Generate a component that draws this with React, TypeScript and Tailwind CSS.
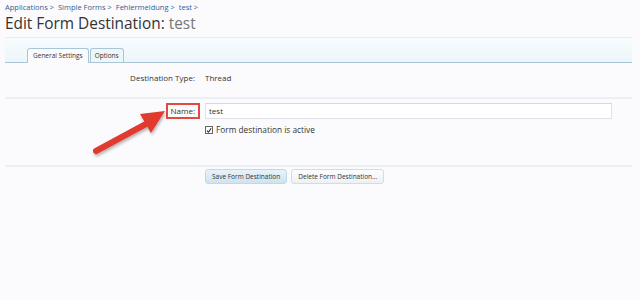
import React from "react";

export default function App() {
  const font = { fontFamily: '"Open Sans", "DejaVu Sans", sans-serif' };
  return (
    <div className="relative w-[640px] h-[300px] bg-[#fbfbfe] text-[#333]" style={font}>
      <div className="pl-[5px] pr-[8px]">
        <div className="pt-[3px] h-[13px] text-[7.5px] leading-[9px] text-[#2f5f8f] flex gap-[4px]">
          <span>Applications &gt;</span>
          <span>Simple Forms &gt;</span>
          <span>Fehlermeldung &gt;</span>
          <span>test &gt;</span>
        </div>
        <h1 className="text-[15.4px] leading-[22px] h-[24px] text-[#333]">
          Edit Form Destination: <span className="text-[#777]">test</span>
        </h1>
        <div className="mt-[0px] h-[26px] border-t border-[#e9eef2] border-b border-b-[#a9c6d5] bg-gradient-to-b from-[#f8fcfe] to-[#ecf6fa] flex items-end pl-[22px]">
          <div className="h-[15px] -mb-px px-[5px] text-[6.5px] leading-[14px] bg-[#fbfbfe] border border-[#a9c6d5] border-b-0 rounded-t-[3px] text-[#333]">
            General Settings
          </div>
          <div className="h-[14px] px-[4px] text-[6.5px] leading-[13px] bg-[#eef6fa] border border-[#a9c6d5] border-b-0 rounded-t-[3px] ml-px text-[#333]">
            Options
          </div>
        </div>
        <div className="flex h-[34px] items-center text-[8px] pb-[5px]">
          <div className="w-[190px] text-right">Destination Type:</div>
          <div className="pl-[10px]">Thread</div>
        </div>
        <div className="h-[2px] bg-[#eceff3]" />
        <div className="flex items-center mt-[3px] h-[17px] text-[8px]">
          <div className="w-[195px] flex justify-end">
            <span className="border-2 border-[#e04a42] px-[3px] leading-[12px]">Name:</span>
          </div>
          <div className="ml-[5px] w-[407px] h-[16px] bg-white border border-[#dfe3e8] border-t-[#d5dae0] pl-[3px] leading-[14px]">test</div>
        </div>
        <div className="flex items-center mt-[5px] text-[8.3px] pl-[200px]">
          <span className="w-[8px] h-[8px] border border-[#666] bg-white flex items-center justify-center mr-[3px]">
            <svg width="7" height="7" viewBox="0 0 7 7"><path d="M1 3.5 L2.8 5.5 L6 1" stroke="#222" strokeWidth="1.2" fill="none" /></svg>
          </span>
          Form destination is active
        </div>
        <div className="mt-[29px] h-[2px] bg-[#eceff3]" />
        <div className="flex gap-[4px] pl-[200px] mt-[2px]">
          <button className="h-[15px] px-[6px] text-[6.5px] leading-[13px] rounded-[3px] border border-[#c5d7e2] bg-gradient-to-b from-[#e8f3f9] to-[#cfe3ee] text-[#333]">Save Form Destination</button>
          <button className="h-[15px] px-[6px] text-[6.5px] leading-[13px] rounded-[3px] border border-[#d5dbe0] bg-gradient-to-b from-[#fcfdfe] to-[#eef1f4] text-[#333]">Delete Form Destination...</button>
        </div>
      </div>
      <svg className="absolute left-0 top-0" width="640" height="300" style={{ pointerEvents: "none" }}>
        <defs>
          <filter id="sh" x="-20%" y="-20%" width="140%" height="140%">
            <feDropShadow dx="1" dy="2" stdDeviation="1.5" floodColor="#000" floodOpacity="0.3" />
          </filter>
        </defs>
        <g filter="url(#sh)">
          <line x1="96" y1="151" x2="146" y2="124" stroke="#e03a2f" strokeWidth="6" strokeLinecap="round" />
          <polygon points="165,111 140,114 151,133" fill="#e03a2f" />
        </g>
      </svg>
    </div>
  );
}
